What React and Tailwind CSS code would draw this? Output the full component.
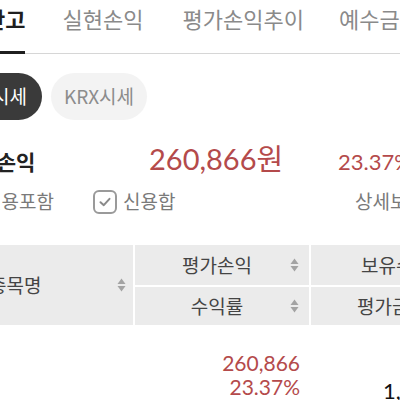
import React from "react";

const kr = { fontFamily: '"Noto Sans CJK KR", "Noto Sans", sans-serif' };
const num = { fontFamily: 'Lato, "Noto Sans CJK KR", sans-serif' };

function SortIcon() {
  return (
    <svg width="9" height="14" viewBox="0 0 9 14" className="shrink-0">
      <path d="M0.5 6 L4.5 0.5 L8.5 6 Z" fill="#a3a3a3" />
      <path d="M0.5 8 L4.5 13.5 L8.5 8 Z" fill="#a3a3a3" />
    </svg>
  );
}

function CheckBox() {
  return (
    <div className="flex h-[24px] w-[24px] shrink-0 items-center justify-center rounded-[6px] border-2 border-[#9a9a9a]">
      <svg width="14" height="14" viewBox="0 0 14 14">
        <path d="M2.5 7.2 L5.8 10.2 L11.5 3.8" fill="none" stroke="#8a8a8a" strokeWidth="2" strokeLinecap="round" strokeLinejoin="round" />
      </svg>
    </div>
  );
}

function App() {
  return (
    <div className="relative h-[400px] w-[400px] overflow-hidden bg-white" style={kr}>
      {/* tabs */}
      <div className="flex h-[54px] items-stretch border-b border-[#d6d6d6] whitespace-nowrap text-[22px]">
        <div className="ml-[-15px] mb-[-1px] flex shrink-0 items-start border-b-[3px] border-[#1f1f1f] pt-[2px] font-bold text-[#1f1f1f]">
          잔고
        </div>
        <div className="ml-[37px] shrink-0 pt-[2px] text-[#8a8a8a]">실현손익</div>
        <div className="ml-[39px] shrink-0 pt-[2px] text-[#8a8a8a]">평가손익추이</div>
        <div className="ml-[35px] shrink-0 pt-[2px] text-[#8a8a8a]">예수금</div>
      </div>

      {/* price source pills */}
      <div className="mt-[19px] flex h-[47px] items-center whitespace-nowrap text-[19px]">
        <div className="ml-[-59px] flex h-full shrink-0 items-center rounded-full bg-[#3a3a3a] pl-[16px] pr-[15px] text-white">
          통합시세
        </div>
        <div className="ml-[9px] flex h-full shrink-0 items-center rounded-full bg-[#f3f3f3] px-[13px] text-[#8c8c8c]">
          KRX시세
        </div>
      </div>

      {/* summary */}
      <div className="mt-[16px] flex h-[40px] items-baseline whitespace-nowrap">
        <div className="w-[149px] shrink-0">
          <span className="ml-[-42px] text-[21px] font-bold text-[#222]">평가손익</span>
        </div>
        <div className="w-[189px] shrink-0 text-[29px] text-[#b44a4b]" style={num}>
          260,866<span style={kr}>원</span>
        </div>
        <div className="shrink-0 text-[22px] text-[#b44a4b]" style={num}>23.37%</div>
      </div>

      <div className="mt-[13px] flex h-[25px] items-center whitespace-nowrap text-[19px] text-[#7a7a7a]">
        <div className="w-[93px] shrink-0">
          <span className="ml-[-16px]">신용포함</span>
        </div>
        <CheckBox />
        <span className="ml-[6px] w-[232px] shrink-0">신용합</span>
        <span className="shrink-0">상세보기</span>
      </div>

      {/* table header */}
      <div className="mt-[31px] flex h-[80px] whitespace-nowrap bg-white text-[19px] text-[#444]">
        <div className="flex w-[133px] shrink-0 items-center bg-[#ebebeb]">
          <span className="ml-[-11px] w-[128px] shrink-0">종목명</span>
          <SortIcon />
        </div>
        <div className="ml-[2px] flex w-[174px] shrink-0 flex-col gap-[2px]">
          <div className="flex h-[40px] items-center bg-[#ebebeb]">
            <span className="ml-[10px] w-[144px] text-center">평가손익</span>
            <div className="ml-[1px]">
              <SortIcon />
            </div>
          </div>
          <div className="flex h-[38px] items-center bg-[#ebebeb]">
            <span className="ml-[10px] w-[144px] text-center">수익률</span>
            <div className="ml-[1px]">
              <SortIcon />
            </div>
          </div>
        </div>
        <div className="ml-[2px] flex flex-1 flex-col gap-[2px]">
          <div className="flex h-[40px] items-center bg-[#ebebeb] pl-[50px]">보유수량</div>
          <div className="flex h-[38px] items-center bg-[#ebebeb] pl-[46px]">평가금액</div>
        </div>
      </div>

      {/* first row */}
      <div className="mt-[26px] flex whitespace-nowrap">
        <div className="w-[135px] shrink-0" />
        <div className="w-[174px] shrink-0 pr-[9px] text-right text-[21px] leading-[24px] text-[#b44a4b]" style={num}>
          <div>260,866</div>
          <div>23.37%</div>
        </div>
        <div className="flex-1 pl-[74px] pt-[28px] text-[22px] leading-[24px] text-[#111]" style={num}>
          1,375,000
        </div>
      </div>
    </div>
  );
}

export default App;
